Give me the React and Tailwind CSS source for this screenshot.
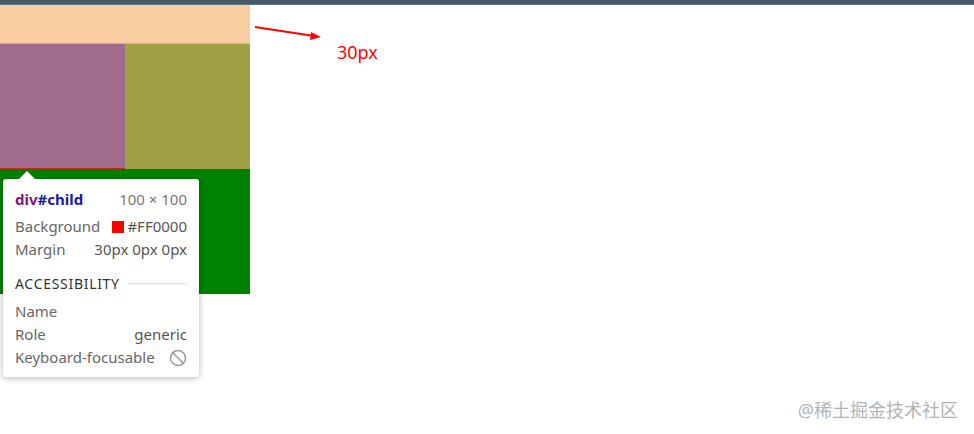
import { Ban } from 'lucide-react'

function Row({ label, children }) {
  return (
    <div className="flex items-center justify-between h-[23px]">
      <span className="text-[#666]">{label}</span>
      <span className="flex items-center text-[#555]">{children}</span>
    </div>
  )
}

export default function App() {
  return (
    <div className="relative w-[974px] h-[434px] bg-white overflow-hidden" style={{ fontFamily: '"Noto Sans", "Open Sans", sans-serif' }}>
      <div className="h-[5px] bg-[#455a64] border-b border-[#5d7280]" />
      <div className="w-[250px]">
        <div className="h-[38px] bg-[#f8cda0]" />
        <div className="h-px bg-[#a9b8d8]" />
        <div className="flex h-[125px]">
          <div className="w-[125px] bg-[#a06c8e] border-b border-[#d02020]" />
          <div className="w-[125px] bg-[#a2a046]" />
        </div>
        <div className="h-[125px] bg-[#008000]" />
      </div>

      {/* arrow annotation */}
      <svg className="absolute left-[250px] top-[20px]" width="80" height="25" viewBox="0 0 80 25">
        <line x1="5" y1="7" x2="64" y2="16" stroke="#ff0000" strokeWidth="2" />
        <polygon points="71,17 61,12 60,20" fill="#ff0000" />
      </svg>
      <div className="absolute left-[337px] top-[39px] text-[18px] text-[#ff0000]">30px</div>

      {/* devtools inspect tooltip */}
      <div className="absolute left-[3px] top-[179px] w-[196px] rounded-[3px] bg-white px-[12px] pt-[9px] pb-[8px] text-[15px] leading-none shadow-[0_1px_6px_rgba(0,0,0,0.3)]">
        <div className="absolute left-[16px] -top-[8px] w-0 h-0 border-l-[8px] border-r-[8px] border-b-[8px] border-l-transparent border-r-transparent border-b-white" />
        <div className="flex items-center justify-between h-[23px]">
          <span className="font-bold">
            <span className="text-[#881280]">div</span>
            <span className="text-[#1a1aa6]">#child</span>
          </span>
          <span className="text-[#777]">100 × 100</span>
        </div>
        <div className="h-[4px]" />
        <Row label="Background">
          <span className="inline-block w-[12px] h-[12px] bg-[#ff0000] mr-[3px]" />
          #FF0000
        </Row>
        <Row label="Margin">30px 0px 0px</Row>
        <div className="flex items-center gap-[8px] mt-[11px] h-[23px]">
          <span className="text-[#333] tracking-[0.7px] text-[14px]">ACCESSIBILITY</span>
          <div className="flex-1 h-px bg-[#dadce0]" />
        </div>
        <div className="h-[5px]" />
        <Row label="Name"></Row>
        <Row label="Role">generic</Row>
        <Row label="Keyboard-focusable">
          <Ban className="w-[18px] h-[18px] text-[#9a9a9a]" strokeWidth={2} />
        </Row>
      </div>

      <div className="absolute right-[16px] top-[397px] text-[18px] text-[#b0b4ba]" style={{ fontFamily: '"Noto Sans", "Noto Sans CJK SC", sans-serif' }}>
        @稀土掘金技术社区
      </div>
    </div>
  )
}
